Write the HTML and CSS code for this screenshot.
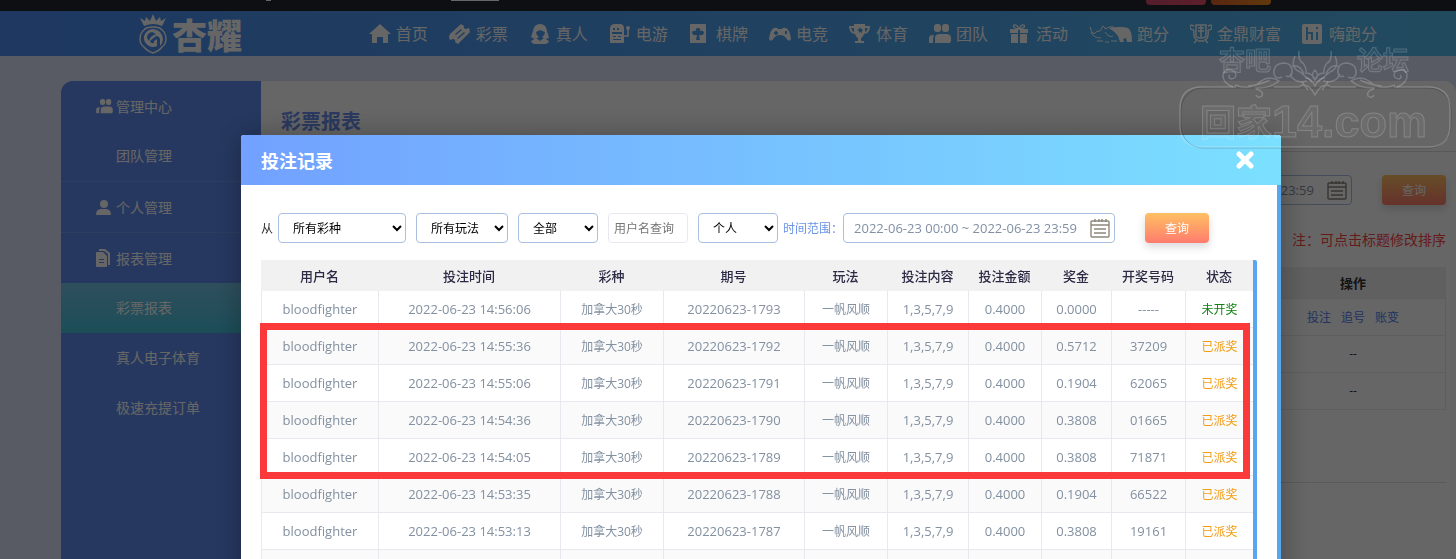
FILE: index.html
```html
<!DOCTYPE html>
<html lang="zh-CN">
<head>
    <meta charset="UTF-8">
    <meta name="viewport" content="width=device-width, initial-scale=1.0">
    <title>彩票报表</title>
    <link rel="stylesheet" href="styles.css">
</head>
<body>
    <!-- Shared icons -->
    <svg class="sprite" aria-hidden="true">
        <symbol id="i-team" viewBox="0 0 22 20">
            <rect x="5" y="0" width="7" height="8" rx="3"/><rect x="13" y="0" width="7" height="8" rx="3"/>
            <path d="M0 19v-5q0-3 4-3h1q-1 2-1 4v4zM6 19v-5q0-4 5-4h6q5 0 5 4v3q0 2-2 2z"/>
        </symbol>
        <symbol id="i-calendar" viewBox="0 0 20 20">
            <path d="M1 4q0-1 1-1h16q1 0 1 1v14q0 1-1 1H2q-1 0-1-1zM1 7h18M4 11h12M4 15h12M5 1v3M9 1v3M12 1v3M16 1v3" fill="none" stroke="#8d867c" stroke-width="1.4"/>
        </symbol>
    </svg>

    <div class="topbar">
        <span class="top-dot"></span>
        <span class="top-line"></span>
        <a href="#" class="top-btn pink" aria-label="充值"></a>
        <a href="#" class="top-btn orange" aria-label="提现"></a>
    </div>

    <header class="header">
        <a href="#" class="logo">
            <svg width="30" height="40" viewBox="0 0 30 40" aria-hidden="true">
                <path d="M6 12L2 4l5 3 1-4 4 4 3-7 3 7 4-4 1 4 5-3-4 8q-9-4-18 0z"/>
                <path d="M15 13q7 0 9 3 4 3 4 9 0 5-4 8-3 4-9 6-6-2-9-6-4-3-4-8 0-6 4-9 2-3 9-3z" fill="none" stroke="#fff" stroke-width="1.4"/>
                <path fill-rule="evenodd" d="M15 15q9 1 10 10 0 4-3 7v-7q-1-3-4-3l-6 5q1 3 4 2v-2l3-2v7q-4 2-8 0-6-4-5-10 3-7 9-7zm-1 3q-5 1-5 6l2 3q1-5 7-7z"/>
            </svg>
            <span>杏耀</span>
        </a>
        <nav class="nav">
            <a href="#">
                <svg width="22" height="20" viewBox="0 0 22 20"><path d="M11 0l11 10h-3v8q0 1-1 1h-4v-6H8v6H4q-1 0-1-1v-8H0z"/></svg>首页
            </a>
            <a href="#">
                <svg width="22" height="20" viewBox="0 0 22 20"><path fill-rule="evenodd" d="M1 10L12 0l3 2q-1 3 2 3l3-1 1 4L9 20l-3-2q1-3-2-3l-3 1q-2-3 0-6zm5 0l1 1 6-5-1-1zm2 4l1 1 7-6-1-1z"/></svg>彩票
            </a>
            <a href="#">
                <svg width="22" height="20" viewBox="0 0 22 20"><path fill-rule="evenodd" d="M11 0q6 0 7 7l2 7-4 1-3-2q3-2 3-5l-5-2-4 2q0 3 3 5l-4 2-4-2 2-6q1-7 7-7z"/><path d="M2 17l5-3 4 3 4-3 5 3q-1 3-4 3H6q-3 0-4-3z"/></svg>真人
            </a>
            <a href="#">
                <svg width="22" height="20" viewBox="0 0 22 20"><path fill-rule="evenodd" d="M1 5q0-5 5-5h5q4 0 4 5v13q0 1-1 1H2q-1 0-1-1zm3-1v2h2V4zm4 0v2h2V4zM3 8v2h10V8zm1 4v1h3v-1zm5 0v1h3v-1zm-5 3v1h8v-1z"/><path d="M15 12h4V4" fill="none" stroke="#fff" stroke-width="1.6"/><circle cx="19" cy="4" r="2"/></svg>电游
            </a>
            <a href="#">
                <svg width="22" height="20" viewBox="0 0 22 20"><path fill-rule="evenodd" d="M2 0h14q1 0 1 1v18H1V1q0-1 1-1zm7 4q-3 0-2 3-4-1-4 2 1 3 5 2l-1 5h4l-1-5q4 1 5-2 0-3-4-2 1-3-2-3z"/></svg>棋牌
            </a>
            <a href="#">
                <svg width="22" height="20" viewBox="0 0 22 20"><path fill-rule="evenodd" d="M5 4q3-1 4 1h4q1-2 4-1 4 2 5 11-2 4-5-1-2-3-6-3t-6 3q-3 5-5 1Q1 6 5 4zm1 3v1H5v2h1v1h2v-1h1V8H8V7zm10 0v3h2V7z"/></svg>电竞
            </a>
            <a href="#">
                <svg width="22" height="20" viewBox="0 0 22 20"><path fill-rule="evenodd" d="M5 0h11v2h5q0 7-6 8-1 3-3 4v3h3v2H6v-2h3v-3q-2-1-3-4Q0 9 0 2h5zM2 4q1 3 3 4V4zm14 0v4q2-1 3-4zm-5-1l-1 2-2 1 2 1v2l1-1 2 1V7l1-2h-2z"/></svg>体育
            </a>
            <a href="#">
                <svg width="22" height="20"><use href="#i-team"/></svg>团队
            </a>
            <a href="#">
                <svg width="22" height="20" viewBox="0 0 22 20"><path d="M1 5h8v4H1zM11 5h8v4h-8zM2 10h7v9H2zM11 10h7v9h-7z"/><path d="M10 5Q3 4 5 1q3-1 5 4 2-5 5-4 2 3-5 4" fill="none" stroke="#fff" stroke-width="1.3"/></svg>活动
            </a>
            <a href="#">
                <svg width="43" height="20" viewBox="0 0 43 20"><path d="M1 3q1 5 4 7 3-4 6-3l3-5q2 1 2 3 5-3 9-2M2 8q2 6 10 6M16 8q4 6 8 4M8 17h6M16 18h4M22 17h6" fill="none" stroke="#fff" stroke-width="1"/><path d="M20 4q12-2 19 0 4 2 4 14h-5l-1-4-3 1 1 3h-4l-2-6q-4-5-9-8z"/></svg>跑分
            </a>
            <a href="#">
                <svg width="22" height="20" viewBox="0 0 22 20"><path d="M4 2Q0 0 0 3t4 3M18 2q4-2 4 1t-4 3M6 1h10v10q0 3-5 3t-5-3zM8 4h6M8 7h6M11 1v12M4 6q-1 8 3 10l-3 3M18 6q1 8-3 10l3 3M8 17h6" fill="none" stroke="#fff" stroke-width="1.4"/></svg>金鼎财富
            </a>
            <a href="#">
                <svg width="22" height="20" viewBox="0 0 22 20"><path fill-rule="evenodd" d="M2 0h16q2 0 2 2v16q0 2-2 2H2q-2 0-2-2V2q0-2 2-2zm2 3v13h2v-6h3v6h2V8H6V3zm10 0v2h2V3zm0 5v8h2V8z"/></svg>嗨跑分
            </a>
        </nav>
    </header>

    <div class="page">
        <aside class="sidebar">
            <section>
                <h2><svg width="17" height="15"><use href="#i-team"/></svg>管理中心</h2>
                <a href="#">团队管理</a>
            </section>
            <section>
                <h2><svg width="17" height="15" viewBox="0 0 17 15"><circle cx="8" cy="4" r="4"/><path d="M0 15q0-6 5-6h5q5 0 5 6z"/></svg>个人管理</h2>
            </section>
            <section>
                <h2><svg width="17" height="18" viewBox="0 0 17 18"><path d="M3 0h6l5 4v12h-2V5L8 2H3z"/><path fill-rule="evenodd" d="M1 3h6l4 4v10q0 1-1 1H1q-1 0-1-1V4q0-1 1-1zm2 7v1h5v-1zm0 3v1h5v-1z"/></svg>报表管理</h2>
                <a href="#" class="active">彩票报表</a>
                <a href="#">真人电子体育</a>
                <a href="#">极速充提订单</a>
            </section>
        </aside>
        <main class="main">
            <h1>彩票报表</h1>
            <div class="main-body">
                <div class="filters filters-right">
                    <span class="date">
                        <input type="text" value="2022-06-23 00:00 ~ 2022-06-23 23:59" aria-label="时间范围">
                        <svg width="20" height="20"><use href="#i-calendar"/></svg>
                    </span>
                    <button type="button" class="btn">查询</button>
                </div>
                <p class="note">注：可点击标题修改排序</p>
                <table class="report">
                    <colgroup><col><col class="col-action"></colgroup>
                    <thead>
                        <tr><th></th><th>操作</th></tr>
                    </thead>
                    <tbody>
                        <tr><td></td><td><span class="links"><a href="#">投注</a><a href="#">追号</a><a href="#">账变</a></span></td></tr>
                        <tr><td></td><td>--</td></tr>
                        <tr><td></td><td>--</td></tr>
                    </tbody>
                </table>
                <hr>
            </div>
        </main>
    </div>

    <!-- Bet records dialog -->
    <div class="overlay">
        <div class="modal" role="dialog" aria-labelledby="modalTitle">
            <div class="modal-head">
                <h2 id="modalTitle">投注记录</h2>
                <button type="button" class="close" aria-label="关闭">
                    <svg width="18" height="18" viewBox="0 0 18 18"><path d="M3 3l12 12M15 3L3 15" stroke="#fff" stroke-width="5" stroke-linecap="round"/></svg>
                </button>
            </div>
            <div class="modal-body">
                <form class="filters">
                    <label for="lottery">从</label>
                    <select id="lottery" class="w-lg"><option>所有彩种</option></select>
                    <select class="w-md" aria-label="玩法"><option>所有玩法</option></select>
                    <select class="w-sm" aria-label="状态"><option>全部</option></select>
                    <input type="text" class="w-sm user" placeholder="用户名查询" aria-label="用户名查询">
                    <select class="w-sm" aria-label="范围"><option>个人</option></select>
                    <label for="range" class="range-label">时间范围：</label>
                    <span class="date">
                        <input type="text" id="range" value="2022-06-23 00:00 ~ 2022-06-23 23:59">
                        <svg width="20" height="20"><use href="#i-calendar"/></svg>
                    </span>
                    <button type="button" class="btn">查询</button>
                </form>
                <div class="records-wrap">
                    <table class="records">
                        <colgroup>
                            <col class="c-user"><col class="c-time"><col class="c-type"><col class="c-issue"><col class="c-play">
                            <col class="c-bet"><col class="c-amount"><col class="c-prize"><col class="c-num"><col class="c-state">
                        </colgroup>
                        <thead>
                            <tr><th>用户名</th><th>投注时间</th><th>彩种</th><th>期号</th><th>玩法</th><th>投注内容</th><th>投注金额</th><th>奖金</th><th>开奖号码</th><th>状态</th></tr>
                        </thead>
                        <tbody>
                            <tr><td>bloodfighter</td><td>2022-06-23 14:56:06</td><td class="cn">加拿大30秒</td><td>20220623-1793</td><td class="cn">一帆风顺</td><td>1,3,5,7,9</td><td>0.4000</td><td>0.0000</td><td>-----</td><td class="cn wait">未开奖</td></tr>
                            <tr><td>bloodfighter</td><td>2022-06-23 14:55:36</td><td class="cn">加拿大30秒</td><td>20220623-1792</td><td class="cn">一帆风顺</td><td>1,3,5,7,9</td><td>0.4000</td><td>0.5712</td><td>37209</td><td class="cn paid">已派奖</td></tr>
                            <tr><td>bloodfighter</td><td>2022-06-23 14:55:06</td><td class="cn">加拿大30秒</td><td>20220623-1791</td><td class="cn">一帆风顺</td><td>1,3,5,7,9</td><td>0.4000</td><td>0.1904</td><td>62065</td><td class="cn paid">已派奖</td></tr>
                            <tr><td>bloodfighter</td><td>2022-06-23 14:54:36</td><td class="cn">加拿大30秒</td><td>20220623-1790</td><td class="cn">一帆风顺</td><td>1,3,5,7,9</td><td>0.4000</td><td>0.3808</td><td>01665</td><td class="cn paid">已派奖</td></tr>
                            <tr><td>bloodfighter</td><td>2022-06-23 14:54:05</td><td class="cn">加拿大30秒</td><td>20220623-1789</td><td class="cn">一帆风顺</td><td>1,3,5,7,9</td><td>0.4000</td><td>0.3808</td><td>71871</td><td class="cn paid">已派奖</td></tr>
                            <tr><td>bloodfighter</td><td>2022-06-23 14:53:35</td><td class="cn">加拿大30秒</td><td>20220623-1788</td><td class="cn">一帆风顺</td><td>1,3,5,7,9</td><td>0.4000</td><td>0.1904</td><td>66522</td><td class="cn paid">已派奖</td></tr>
                            <tr><td>bloodfighter</td><td>2022-06-23 14:53:13</td><td class="cn">加拿大30秒</td><td>20220623-1787</td><td class="cn">一帆风顺</td><td>1,3,5,7,9</td><td>0.4000</td><td>0.3808</td><td>19161</td><td class="cn paid">已派奖</td></tr>
                            <tr><td></td><td></td><td></td><td></td><td></td><td></td><td></td><td></td><td></td><td></td></tr>
                        </tbody>
                    </table>
                    <div class="highlight"></div>
                </div>
            </div>
        </div>
    </div>

    <!-- Forum stamp -->
    <svg class="stamp" width="276" height="108" viewBox="0 0 276 108">
        <g class="stamp-shade">
            <rect x="3" y="46" width="270" height="60" rx="22"/>
        </g>
        <g class="stamp-line">
            <path d="M58 45H24Q2 45 2 67v16q0 22 22 22h226q22 0 22-22V67q0-22-22-22h-34M96 45h26M152 45h26"/>
            <path d="M104 35q-6 3-8-3-1-10 9-11 10 0 9 10-1 5-6 3M112 32q4 10 17 7M117 14q-5 12 5 16l12 10M124 20q5 5 4 12M114 24q8-2 12 8M121 9q-1 8 3 12"/>
            <path d="M170 35q6 3 8-3 1-10-9-11-10 0-9 10 1 5 6 3M162 32q-4 10-17 7M157 14q5 12-5 16l-12 10M150 20q-5 5-4 12M160 24q-8-2-12 8M153 9q1 8-3 12"/>
            <path d="M137 28q-5 5 0 10 5-5 0-10zM127 36q6-1 10 8 4-9 10-8M122 44q8-4 15 9 7-13 15-9M129 31q6 1 8 7 2-6 8-7M124 40l6 8M150 40l-6 8"/>
            <path d="M55 45q-11-4-10-13 4-8 12-2 3 6-4 7-4-2-1-4M57 43q16 6 26-4 9-6 18 0-10 8-24 7M70 44q12-1 22-6M78 47q8 2 6 7-4 3-6-1"/>
            <path d="M219 45q11-4 10-13-4-8-12-2-3 6 4 7 4-2 1-4M217 43q-16 6-26-4-9-6-18 0 10 8 24 7M204 44q-12-1-22-6M196 47q-8 2-6 7 4 3 6-1"/>
        </g>
        <g class="stamp-text">
            <text x="41" y="28" class="stamp-small">杏吧</text>
            <text x="179" y="28" class="stamp-small">论坛</text>
            <text x="22" y="94" class="stamp-cn">回家</text>
            <text x="94" y="95" class="stamp-big">14.com</text>
        </g>
    </svg>
</body>
</html>
```
FILE: styles.css
```css
* {
    box-sizing: border-box;
}
body {
    margin: 0;
    height: 100vh;
    overflow: hidden;
    display: flex;
    flex-direction: column;
    background-color: #dce4f8;
    color: #333;
    font-family: "Open Sans", "Noto Sans CJK SC", sans-serif;
    font-size: 12px;
}
h1, h2, p {
    margin: 0;
}
a {
    text-decoration: none;
}
svg {
    flex: none;
    fill: #fff;
}
.sprite {
    position: absolute;
    width: 0;
    height: 0;
}

/* top bar and header */
.topbar {
    display: flex;
    flex: none;
    height: 11px;
    padding: 0 185px 0 266px;
    background-color: #232631;
}
.top-dot {
    width: 5px;
    height: 1px;
    background-color: #fff;
}
.top-line {
    width: 48px;
    height: 1px;
    margin: 0 auto 0 180px;
    background-color: #fff;
}
.top-btn {
    width: 60px;
    height: 5px;
    margin-left: 5px;
    border-radius: 0 0 4px 4px;
}
.pink {
    background: linear-gradient(90deg, #d04c70, #e8506a);
}
.orange {
    background: linear-gradient(90deg, #e0602c, #f09020);
}
.header {
    display: flex;
    flex: none;
    align-items: center;
    justify-content: space-between;
    height: 45px;
    padding: 0 79px 0 138px;
    background: linear-gradient(90deg, #4c8cf2, #55b9ee);
}
.logo {
    display: flex;
    align-items: center;
    gap: 4px;
    color: #fff;
    font-size: 35px;
    font-weight: 900;
    line-height: 40px;
}
.logo span {
    padding-top: 4px;
}
.nav {
    display: flex;
    gap: 21px;
}
.nav a {
    display: flex;
    align-items: center;
    gap: 5px;
    color: #fff;
    font-size: 16px;
    line-height: 24px;
}

/* page */
.page {
    display: flex;
    flex: 1;
    margin: 25px 0 0 61px;
}
.sidebar {
    flex: none;
    width: 200px;
    border-radius: 12px 0 0 0;
    background-color: #5f8cee;
    overflow: hidden;
}
.sidebar section + section {
    border-top: 1px solid #739aef;
}
.sidebar h2 {
    display: flex;
    align-items: center;
    gap: 3px;
    height: 50px;
    padding-left: 35px;
    color: #fff;
    font-size: 14px;
    font-weight: 400;
}
.sidebar a {
    display: block;
    padding-left: 55px;
    color: #fff;
    font-size: 14px;
    line-height: 50px;
}
.sidebar .active {
    background: linear-gradient(#76c4e8, #46c2dc);
}
.main {
    flex: 1;
    border-radius: 0 12px 0 0;
    background-color: #fff;
}
.main h1 {
    height: 71px;
    padding: 20px 20px 0;
    border-bottom: 1px solid #dcdcdc;
    color: #6c8ff0;
    font-size: 20px;
    line-height: 42px;
}
.main-body {
    padding: 23px 10px 0 20px;
}
.filters {
    display: flex;
    align-items: center;
    gap: 10px;
    height: 30px;
}
.filters-right {
    justify-content: flex-end;
}
.note {
    margin: 24px 0 16px;
    color: #f44;
    font-size: 14px;
    line-height: 22px;
    text-align: right;
}
.report {
    width: 100%;
    border-collapse: collapse;
    table-layout: fixed;
    text-align: center;
}
.col-action {
    width: 185px;
}
.report th {
    height: 31px;
    padding: 0;
    background-color: #f0f0f0;
    font-size: 13px;
}
.report td {
    height: 37px;
    padding: 0;
    border: 1px solid #ebebeb;
}
.links {
    display: flex;
    justify-content: center;
    gap: 10px;
}
.links a {
    color: #5a80ee;
}
hr {
    margin: 72px 0 0;
    border: 0;
    border-top: 1px solid #e0e0e0;
}

/* form controls */
select, input {
    height: 30px;
    border: 1px solid #a9bfe0;
    border-radius: 4px;
    background-color: #fff;
    color: #000;
    font-family: inherit;
    font-size: 12px;
}
select {
    padding: 0 0 0 10px;
}
.user {
    padding: 0 5px;
    border-color: #e6e9f0;
}
.w-lg {
    width: 128px;
}
.w-md {
    width: 92px;
}
.w-sm {
    width: 80px;
}
.filters label {
    margin-right: -5px;
}
.filters .range-label {
    margin: 0 -10px 0 -5px;
    color: #6b93e8;
}
.date {
    position: relative;
    display: flex;
    width: 272px;
}
.date input {
    width: 100%;
    padding: 0 10px;
    color: #8290a4;
    font-size: 13px;
}
.date svg {
    position: absolute;
    top: 5px;
    right: 5px;
}
.btn {
    width: 64px;
    height: 30px;
    margin-left: 20px;
    padding: 0;
    border: 0;
    border-radius: 4px;
    background: linear-gradient(#ffc062, #ff7c6e);
    box-shadow: 0 4px 8px rgba(0, 0, 0, .15);
    color: #fff;
    font-family: inherit;
    font-size: 12px;
}

/* dialog */
.overlay {
    position: fixed;
    inset: 0;
    padding: 135px 175px 0 241px;
    background-color: rgba(0, 0, 0, .6);
    overflow: hidden;
}
.modal {
    border-radius: 3px 3px 0 0;
    background-color: #fff;
    box-shadow: 1px 1px 30px rgba(0, 0, 0, .3);
}
.modal-head {
    display: flex;
    align-items: center;
    justify-content: space-between;
    height: 50px;
    padding: 0 27px 0 20px;
    border-radius: 3px 3px 0 0;
    background: linear-gradient(90deg, #72a1ff, #7be0ff);
}
.modal-head h2 {
    color: #fff;
    font-size: 18px;
}
.close {
    display: flex;
    padding: 0;
    border: 0;
    background: none;
}
.modal-body {
    padding: 28px 20px 0;
    border-right: 4px solid #58a5f0;
}
.records-wrap {
    position: relative;
    margin-top: 17px;
    border-right: 4px solid #58a5f0;
    border-radius: 0 2px 0 0;
}
.records {
    width: 100%;
    border-collapse: separate;
    border-spacing: 0;
    table-layout: fixed;
    text-align: center;
}
.records th {
    height: 31px;
    padding: 0;
    background-color: #f1f1f1;
    color: #2c2a45;
    font-size: 13px;
    font-weight: 500;
}
.records td {
    height: 37px;
    padding: 0;
    border-left: 1px solid #e8e8ef;
    border-bottom: 1px solid #e8e8ef;
    color: #8290a0;
    font-size: 13px;
}
.records tr:nth-child(even) td {
    background-color: #fafafb;
}
.records .cn {
    font-size: 12px;
}
.records .wait {
    color: #118011;
}
.records .paid {
    color: #f39c12;
}
.c-user { width: 117px; }
.c-time { width: 182px; }
.c-type { width: 103px; }
.c-issue { width: 141px; }
.c-play { width: 83px; }
.c-bet { width: 81px; }
.c-amount { width: 73px; }
.c-prize { width: 70px; }
.c-num { width: 74px; }
.c-state { width: 68px; }
.highlight {
    position: absolute;
    top: 63px;
    left: -1px;
    right: 3px;
    height: 156px;
    border: 7px solid #fb393a;
}

/* forum stamp */
.stamp {
    position: fixed;
    top: 42px;
    right: 2px;
    pointer-events: none;
}
.stamp-line {
    fill: none;
    stroke: rgba(255, 255, 255, .2);
    stroke-width: 1.5;
}
.stamp-shade {
    fill: none;
    stroke: rgba(0, 0, 0, .2);
}
.stamp-text {
    fill: rgba(255, 255, 255, .04);
    stroke: rgba(255, 255, 255, .18);
    font-family: "Noto Sans CJK SC", sans-serif;
    font-weight: 700;
}
.stamp-small {
    font-size: 26px;
}
.stamp-cn {
    font-size: 36px;
}
.stamp-big {
    font-family: "Liberation Sans", sans-serif;
    font-size: 45px;
}
```
